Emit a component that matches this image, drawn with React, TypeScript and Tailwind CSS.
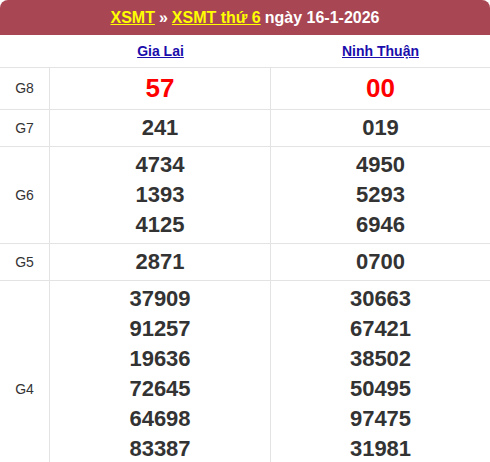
import React from "react";

type Row = {
  label: string;
  a: string[];
  b: string[];
  big?: boolean;
};

const rows: Row[] = [
  { label: "G8", a: ["57"], b: ["00"], big: true },
  { label: "G7", a: ["241"], b: ["019"] },
  { label: "G6", a: ["4734", "1393", "4125"], b: ["4950", "5293", "6946"] },
  { label: "G5", a: ["2871"], b: ["0700"] },
  {
    label: "G4",
    a: ["37909", "91257", "19636", "72645", "64698", "83387", "91840"],
    b: ["30663", "67421", "38502", "50495", "97475", "31981", "22317"],
  },
];

function NumCell({ values, big }: { values: string[]; big?: boolean }) {
  return (
    <div className="flex-1 border-l border-[#e3e3e3] py-[3px] text-center">
      {values.map((v) => (
        <div
          key={v}
          className={
            big
              ? "text-[26px] font-bold leading-[35px] text-[#ff0000]"
              : "text-[22px] font-bold leading-[30px] text-[#333333]"
          }
        >
          {v}
        </div>
      ))}
    </div>
  );
}

export default function App() {
  return (
    <div className="w-[490px] bg-white font-['Liberation_Sans',Arial,sans-serif]">
      <div className="flex h-[35px] items-center justify-center rounded-t-[8px] bg-[#a94653] text-[16px] font-bold text-white">
        <a href="#" className="text-[#ffff00] underline">
          XSMT
        </a>
        <span className="mx-[4px]">»</span>
        <a href="#" className="text-[#ffff00] underline">
          XSMT thứ 6
        </a>
        <span className="ml-[4px]">ngày 16-1-2026</span>
      </div>

      <div className="flex h-[32px] items-center text-[14px] font-bold">
        <div className="w-[50px]" />
        <div className="flex-1 text-center">
          <a href="#" className="text-[#1a0dab] underline">
            Gia Lai
          </a>
        </div>
        <div className="w-[219px] text-center">
          <a href="#" className="text-[#1a0dab] underline">
            Ninh Thuận
          </a>
        </div>
      </div>

      {rows.map((row) => (
        <div key={row.label} className="flex border-t border-[#e3e3e3]">
          <div className="flex w-[49px] items-center justify-center text-[14px] text-[#333333]">
            {row.label}
          </div>
          <NumCell values={row.a} big={row.big} />
          <div className="flex w-[220px]">
            <NumCell values={row.b} big={row.big} />
          </div>
        </div>
      ))}
    </div>
  );
}
